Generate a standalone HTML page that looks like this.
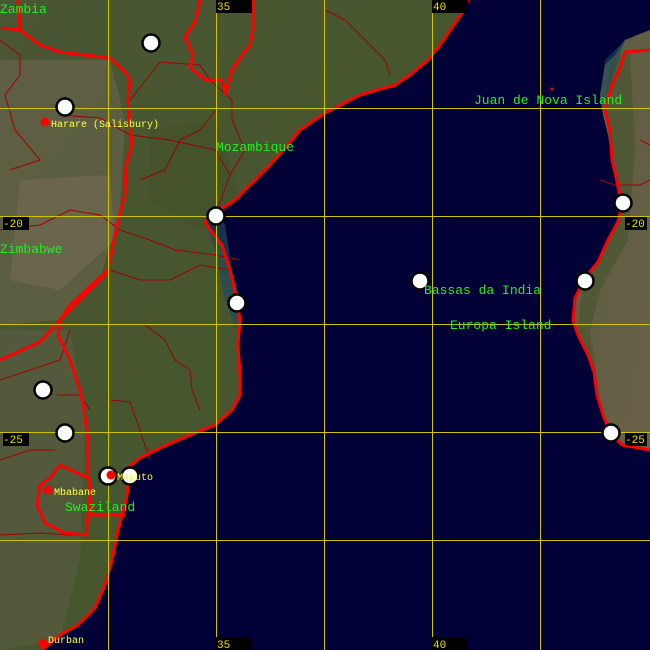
<!DOCTYPE html>
<html><head><meta charset="utf-8"><style>
html,body{margin:0;padding:0;background:#000036;}
svg{display:block}
text{font-family:"Liberation Mono","DejaVu Sans Mono",monospace;}
</style></head><body>
<svg width="650" height="650" viewBox="0 0 650 650" xmlns="http://www.w3.org/2000/svg">
<defs>
<linearGradient id="lg" x1="0" y1="0" x2="1" y2="1">
<stop offset="0" stop-color="#4a5634"/><stop offset="0.5" stop-color="#46562e"/><stop offset="1" stop-color="#505438"/>
</linearGradient>
<linearGradient id="mg" x1="0" y1="0" x2="1" y2="1">
<stop offset="0" stop-color="#5a5a3e"/><stop offset="1" stop-color="#6a6248"/>
</linearGradient>
</defs>
<rect width="650" height="650" fill="#000036"/>
<path d="M0,0 L468,0 L462,13 L440,45 L428,60 L410,75 L395,85 L360,95 L325,113 L300,130 L285,148 L270,165 L250,185 L235,200 L216,212 L205,222 L212,232 L222,245 L230,270 L236,295 L240,320 L238,345 L240,375 L240,395 L232,410 L215,425 L190,435 L160,448 L140,458 L125,470 L128,490 L125,505 L118,530 L112,560 L105,585 L95,608 L78,625 L60,635 L48,645 L42,650 L0,650 Z" fill="url(#lg)"/>
<path d="M0,60 L110,60 L125,120 L120,210 L100,280 L60,320 L0,325 Z" fill="#6d6650" opacity="0.55"/>
<path d="M0,330 L70,330 L85,420 L80,560 L60,640 L0,650 Z" fill="#5d5c45" opacity="0.55"/>
<path d="M20,180 L110,175 L115,240 L60,290 L10,280 Z" fill="#7a7058" opacity="0.45"/>
<path d="M150,130 L216,120 L240,200 L200,230 L150,200 Z" fill="#3f5028" opacity="0.5"/>
<path d="M205,222 L216,212 L225,225 L232,270 L240,300 L236,330 L225,300 L215,250 Z" fill="#1f4a5a" opacity="0.7"/>
<path d="M650,30 L625,40 L615,55 L605,65 L600,95 L603,115 L608,135 L612,160 L618,185 L622,205 L618,222 L608,240 L598,262 L585,278 L575,298 L573,320 L578,335 L588,355 L594,372 L597,395 L603,415 L610,433 L622,445 L650,450 Z" fill="url(#mg)"/>
<path d="M612,60 L630,52 L635,150 L628,240 L600,290 L590,330 L600,400 L592,370 L578,330 L582,290 L606,250 L620,210 L610,150 L604,100 Z" fill="#44552e" opacity="0.6"/>
<path d="M625,40 L605,60 L600,100 L608,140 L602,110 Z" fill="#1c4a58" opacity="0.6"/>
<g fill="none" stroke="#a00000" stroke-width="1">
<path d="M0,40 L20,55 L20,75 L5,95 L15,130 L40,160 L10,170"/>
<path d="M60,115 L100,118 L130,135 L170,140 L215,150 L230,175 L216,212"/>
<path d="M130,100 L160,62 L200,65 L210,80 L232,100 L232,120 L245,150 L230,175"/>
<path d="M140,180 L165,170 L180,140 L200,130 L216,110"/>
<path d="M0,230 L40,225 L70,210 L100,215 L120,230 L150,240 L175,250 L216,255 L240,260"/>
<path d="M110,270 L140,280 L170,280 L200,265 L230,270"/>
<path d="M0,380 L30,370 L60,360 L70,330"/>
<path d="M57,395 L80,395 L90,410"/>
<path d="M145,325 L165,340 L175,360 L190,370 L192,390 L200,410"/>
<path d="M110,400 L130,402 L140,430 L150,460"/>
<path d="M0,535 L40,533 L70,535 L85,535"/>
<path d="M0,460 L30,450 L55,450"/>
<path d="M325,10 L345,20 L360,35 L385,60 L390,75"/>
<path d="M600,180 L615,185 L640,185 L650,180"/>
<path d="M640,140 L650,145"/>
</g>
<g fill="none" stroke="#ff0000" stroke-width="3" stroke-linejoin="round">
<path d="M468,0 L462,13 L440,45 L428,60 L410,75 L395,85 L360,95 L325,113 L300,130 L285,148 L270,165 L250,185 L235,200 L216,212 L205,222 L212,232 L222,245 L230,270 L236,295 L240,320 L238,345 L240,375 L240,395 L232,410 L215,425 L190,435 L160,448 L140,458 L125,470 L128,490 L125,505 L118,530 L112,560 L105,585 L95,608 L78,625 L60,635 L48,645 L42,650"/>
<path d="M625,52 L650,50"/>
<path d="M625,52 L620,68 L612,85 L605,110 L610,130 L612,160 L618,185 L622,205 L618,222 L608,240 L598,262 L585,278 L575,298 L573,320 L578,335 L588,355 L594,372 L597,395 L603,415 L610,433 L622,445 L650,450"/>
<path d="M2,28 L20,30 L40,45 L60,52 L110,58 L125,72 L130,80 L128,100 L132,145 L126,165 L125,195 L120,212 L112,250 L107,273 L85,295 L60,320 L58,335 L70,360 L80,390 L84,410 L88,440 L88,470 L92,515 L125,515"/>
<path d="M18,0 L20,30"/>
<path d="M200,0 L196,20 L185,37 L193,55 L190,67 L205,80 L222,80 L225,92 L228,92"/>
<path d="M253,0 L253,30 L250,45 L240,58 L232,70 L228,85 L225,95"/>
<path d="M60,465 L88,478 M88,478 L90,495 L88,515 L86,535 L65,533 L45,523 L37,505 L40,485 L50,478 L60,465"/>
<path d="M60,320 L40,342 L0,360"/>
<path d="M108,270 L70,305 L60,320"/>
</g>
<g stroke="#ccc400" stroke-width="1">
<line x1="108.5" y1="0" x2="108.5" y2="650"/>
<line x1="216.5" y1="0" x2="216.5" y2="650"/>
<line x1="324.5" y1="0" x2="324.5" y2="650"/>
<line x1="432.5" y1="0" x2="432.5" y2="650"/>
<line x1="540.5" y1="0" x2="540.5" y2="650"/>
<line x1="0" y1="108.5" x2="650" y2="108.5"/>
<line x1="0" y1="216.5" x2="650" y2="216.5"/>
<line x1="0" y1="324.5" x2="650" y2="324.5"/>
<line x1="0" y1="432.5" x2="650" y2="432.5"/>
<line x1="0" y1="540.5" x2="650" y2="540.5"/>
</g>
<g fill="#000">
<rect x="216" y="0" width="36" height="13"/>
<rect x="432" y="0" width="36" height="13"/>
<rect x="216" y="637" width="36" height="13"/>
<rect x="432" y="637" width="36" height="13"/>
<rect x="3" y="217" width="26" height="13"/>
<rect x="625" y="217" width="22" height="13"/>
<rect x="3" y="433" width="26" height="13"/>
<rect x="625" y="433" width="22" height="13"/>
</g>
<g fill="#e8e000" font-size="11">
<text x="217" y="10">35</text>
<text x="433" y="10">40</text>
<text x="217" y="648">35</text>
<text x="433" y="648">40</text>
<text x="3" y="227">-20</text>
<text x="625" y="227">-20</text>
<text x="3" y="443">-25</text>
<text x="625" y="443">-25</text>
</g>
<g fill="#fff" stroke="#000" stroke-width="2.5">
<circle cx="151" cy="43" r="8.5"/>
<circle cx="65" cy="107" r="8.5"/>
<circle cx="216" cy="216" r="8.5"/>
<circle cx="237" cy="303" r="8.5"/>
<circle cx="43" cy="390" r="8.5"/>
<circle cx="65" cy="433" r="8.5"/>
<circle cx="108" cy="476" r="8.5"/>
<circle cx="130" cy="476" r="8.5"/>
<circle cx="420" cy="281" r="8.5"/>
<circle cx="585" cy="281" r="8.5"/>
<circle cx="623" cy="203" r="8.5"/>
<circle cx="611" cy="433" r="8.5"/>
</g>
<g fill="#ff0000">
<circle cx="45" cy="122" r="4.5"/>
<circle cx="48" cy="490" r="4.5"/>
<circle cx="111" cy="475" r="4.5"/>
<circle cx="43" cy="643" r="4.5"/>
<circle cx="552" cy="89" r="1.5"/>
</g>
<g fill="#ffff40" font-size="10">
<text x="51" y="127">Harare (Salisbury)</text>
<text x="54" y="495">Mbabane</text>
<text x="117" y="480">Maputo</text>
<text x="48" y="643">Durban</text>
</g>
<g fill="#20f020" font-size="13">
<text x="0" y="13">Zambia</text>
<text x="216" y="151">Mozambique</text>
<text x="0" y="253">Zimbabwe</text>
<text x="65" y="511">Swaziland</text>
<text x="474" y="104">Juan de Nova Island</text>
<text x="424" y="294">Bassas da India</text>
<text x="450" y="329">Europa Island</text>
</g>
</svg>
</body></html>
